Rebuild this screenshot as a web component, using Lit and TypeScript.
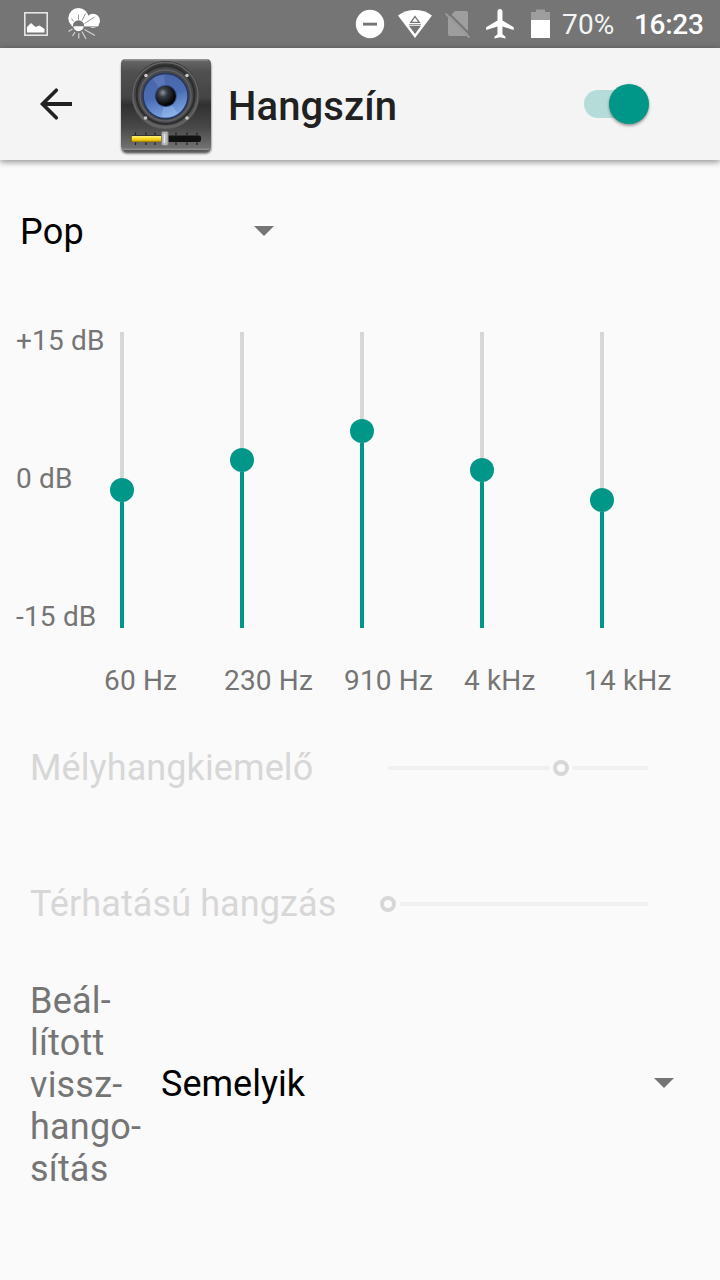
import { LitElement, html, svg, css } from "lit";
import { customElement, property } from "lit/decorators.js";

@customElement("status-bar")
class StatusBar extends LitElement {
  static styles = css`
    :host { display: block; }
    .bar { height: 48px; box-sizing: border-box; background: #757575; color: #fff; display: flex; align-items: flex-start; font: 400 28px/48px Roboto, sans-serif; }
    .left { display: block; width: 355px; height: 48px; }
    .right { display: block; width: 207px; height: 48px; }
    .pct { width: 72px; padding-top: 1px; white-space: nowrap; font-size: 28px; letter-spacing: .15px; color: #f4f4f4; }
    .time { font-weight: 500; padding-top: 1px; white-space: nowrap; letter-spacing: -.3px; }
  `;
  render() {
    return html`<div class="bar">
      <svg class="left" viewBox="0 0 355 48">
        <rect x="24.8" y="12.8" width="22.4" height="22.4" fill="none" stroke="#ececec" stroke-width="1.5"/>
        <path d="M27 32.5V27l4-4 4.5 4 4-1.5 5 3.5v3.500z" fill="#fff"/>
        <g fill="#fff"><circle cx="78.500" cy="18.300" r="10.200"/><circle cx="93" cy="20.700" r="7"/><path d="M80 16h10l9 9-1.500 2H78z"/></g>
        <g stroke="#8a8a8a" stroke-width=".9"><path d="M78.500 19.500V14.500M73.500 21.500l-2-3M82 20.500l3.500-7M84.500 23.500l10-6.500M71.500 25l-2-.8"/></g>
        <circle cx="78.500" cy="26" r="5.700" fill="#757575"/>
        <path d="M73.300 26.200h10.400a5.200 5 0 0 1-10.400 0z" fill="#fff"/>
        <path d="M84 26.500h14" stroke="#b0b0b0"/>
        <path d="M78.800 33v5.500M82 31.500l4 7.500M84.500 29.500l10.500 6M75 32l-2.500 4M72.500 29l-4 2.500" stroke="#d2d2d2" stroke-width="1.200"/>
      </svg>
      <svg class="right" viewBox="355 0 207 48">
        <circle cx="370" cy="24" r="14.200" fill="#fff"/><rect x="363" y="22.700" width="14" height="2.900" fill="#757575"/>
        <path d="M398 15.500C403 11.800 409 10 415 10s12 1.800 17 5.500L415 38z" fill="#fff"/>
        <path d="M410.700 22.300h8.600L415 16.600z" fill="none" stroke="#757575" stroke-width="1.300"/>
        <path d="M409 25.800h12l-6 8.200z" fill="#757575"/><path d="M409 24.500h12" stroke="#999"/>
        <path d="M455 11h11a2 2 0 0 1 2 2v21a2 2 0 0 1-2 2h-16a2 2 0 0 1-2-2V18z" fill="#9e9e9e"/>
        <path d="M447 11.500l23 23" stroke="#757575" stroke-width="2"/><path d="M445.500 13.500l24 24" stroke="#9a9a9a" stroke-width="2"/>
        <path transform="translate(483.400 5.900) scale(1.380 1.420)" d="M22 17v-2l-8.200-4.800V4a1.800 1.800 0 0 0-3.600 0v6.200L2 15v2l8.200-2.500V20L8 21.700V23l4-1 4 1v-1.300L13.800 20v-5.500z" fill="#fff"/>
        <path d="M531 12h5V9.500h9V12h5v9h-19z" fill="#9e9e9e"/><rect x="531" y="20" width="19" height="18" fill="#fff"/>
      </svg>
      <div class="pct">70%</div><div class="time">16:23</div>
    </div>`;
  }
}

@customElement("title-bar")
class TitleBar extends LitElement {
  static styles = css`
    :host { display: block; }
    .bar { height: 112px; background: #f4f4f4; box-shadow: 0 1px 7px rgba(0,0,0,.28), 0 3px 5px rgba(0,0,0,.18); display: flex; align-items: center; }
    .back { display: block; width: 36px; height: 36px; margin-left: 38px; }
    .logo { display: block; width: 100px; height: 106px; margin-left: 42px; margin-top: 2px; }
    .title { font: 500 40px/47px Roboto, sans-serif; letter-spacing: .1px; color: #212121; margin-left: 12px; padding-top: 4px; flex: 1; }
    .switch { display: flex; justify-content: flex-end; align-items: center; width: 65px; height: 28px; margin-right: 71px; border-radius: 14px; background: linear-gradient(90deg, #b5dcd9 48px, transparent 48px); }
    .thumb { width: 40px; height: 40px; flex: none; border-radius: 50%; background: #009688; box-shadow: 0 2px 3px rgba(0,0,0,.35), 0 0 2px rgba(0,0,0,.12); }
  `;
  render() {
    const ticks = [135.5, 146, 155, 176, 187, 197];
    return html`<div class="bar">
      <svg class="back" viewBox="38 86 36 36"><path d="M56.300 90.200L42.500 104l13.800 13.800" fill="none" stroke="#212121" stroke-width="3.600" stroke-linecap="round"/><path d="M72 104H42.500" stroke="#212121" stroke-width="4"/></svg>
      <svg class="logo" viewBox="116 52 100 106">
        <defs>
          <linearGradient id="box" x1="0" y1="0" x2="0" y2="1"><stop offset="0" stop-color="#686868"/><stop offset=".14" stop-color="#505050"/><stop offset=".42" stop-color="#454545"/><stop offset=".5" stop-color="#303030"/><stop offset=".75" stop-color="#484848"/><stop offset="1" stop-color="#757575"/></linearGradient>
          <linearGradient id="rim" x1="0" y1="0" x2="0" y2="1"><stop offset="0" stop-color="#333"/><stop offset="1" stop-color="#5e5e5e"/></linearGradient>
          <linearGradient id="cone" x1=".3" y1="0" x2=".6" y2="1"><stop offset="0" stop-color="#4a64a4"/><stop offset=".5" stop-color="#4b6db6"/><stop offset="1" stop-color="#83aae6"/></linearGradient>
          <radialGradient id="cap" cx=".36" cy=".34" r=".62"><stop offset="0" stop-color="#8e949c"/><stop offset=".35" stop-color="#373c43"/><stop offset="1" stop-color="#030405"/></radialGradient>
          <linearGradient id="yel" x1="0" y1="0" x2="0" y2="1"><stop offset="0" stop-color="#fff27a"/><stop offset=".5" stop-color="#f7d51c"/><stop offset="1" stop-color="#d5a500"/></linearGradient>
          <filter id="soft" x="-10%" y="-10%" width="120%" height="120%"><feGaussianBlur stdDeviation="1.100"/></filter>
        </defs>
        <rect x="121.500" y="61" width="89.500" height="92.500" rx="5" fill="#222" opacity=".75" filter="url(#soft)"/>
        <rect x="121" y="59" width="90" height="91" rx="4.500" fill="url(#box)"/>
        <path d="M124 59.800h84" stroke="#a0a0a0" stroke-width="1.200"/>
        <path d="M123 149.200h86" stroke="#999" stroke-width="1"/>
        <circle cx="165.500" cy="95" r="34" fill="url(#rim)"/>
        <circle cx="165.500" cy="95" r="32.500" fill="none" stroke="#666" stroke-width="1.300"/>
        <circle cx="165.500" cy="95" r="29" fill="#45474a" stroke="#2c2c2c" stroke-width="2"/>
        <circle cx="165.500" cy="95.500" r="25.500" fill="none" stroke="#5e6063" stroke-width="1.500"/>
        <circle cx="165.500" cy="96" r="22.500" fill="url(#cone)" stroke="#26375f" stroke-width="1.500"/>
        <path d="M165.500 96l-13-17a22 22 0 0 1 12-4z" fill="#7d9adb" opacity=".3"/>
        <path d="M165.500 96l-4 21a21 21 0 0 0 16-4z" fill="#b2dcff" opacity=".25"/>
        <circle cx="165.800" cy="96" r="11" fill="#334d85"/>
        <circle cx="165.700" cy="96" r="10.200" fill="url(#cap)"/>
        <g fill="#c9c9c9"><circle cx="146" cy="75.500" r="1.800"/><circle cx="187" cy="75.500" r="1.800"/><circle cx="145.500" cy="118" r="1.800"/><circle cx="187" cy="118" r="1.800"/></g>
        ${ticks.map((x) => svg`<path d=${`M${x} 132.5v2.500M${x} 142.500v2.500`} stroke="#222" stroke-width="1.300"/>`)}
        <rect x="131" y="135.500" width="70" height="6.500" rx="2" fill="#111"/>
        <rect x="131.500" y="136" width="32" height="5.700" rx="1" fill="url(#yel)"/>
        <rect x="161.500" y="131.500" width="6.700" height="14" rx="1.500" fill="#b5b5b5" stroke="#777" stroke-width=".8"/>
        <path d="M164.500 134v9" stroke="#e9e9e9" stroke-width="1.500"/>
      </svg>
      <div class="title">Hangszín</div>
      <div class="switch"><div class="thumb"></div></div>
    </div>`;
  }
}

@customElement("band-slider")
class BandSlider extends LitElement {
  @property({ type: Number }) level = 0;
  static styles = css`
    :host { display: block; width: 24px; }
    .track { display: flex; flex-direction: column; align-items: center; height: 296px; }
    .rest { width: 4px; background: #d7d7d7; }
    .knob { width: 24px; height: 24px; flex: none; border-radius: 50%; background: #009688; }
    .fill { width: 4px; flex: 1; background: #009688; }
  `;
  render() {
    return html`<div class="track"><div class="rest" style="height:${this.level}px"></div><div class="knob"></div><div class="fill"></div></div>`;
  }
}

@customElement("effect-slider")
class EffectSlider extends LitElement {
  @property({ type: Number }) value = 0;
  static styles = css`
    :host { display: block; width: 268px; }
    .track { display: flex; align-items: center; height: 16px; }
    .before, .after { height: 4px; background: #f0f0f0; }
    .before { margin-left: 8px; }
    .knob { width: 16px; height: 16px; box-sizing: border-box; border: 4px solid #d7d7d7; border-radius: 50%; margin: 0 4px; flex: none; }
    .start { margin-left: 0; }
    .after { flex: 1; margin-right: 0; }
  `;
  render() {
    return html`<div class="track">${this.value
      ? html`<div class="before" style="width:${this.value}px"></div><div class="knob"></div>`
      : html`<div class="knob start"></div>`}<div class="after"></div></div>`;
  }
}

@customElement("app-root")
class AppRoot extends LitElement {
  static styles = css`
    :host { display: block; width: 720px; height: 1280px; overflow: hidden; background: #fafafa; font: 400 36px/42px Roboto, sans-serif; letter-spacing: .1px; color: #000; }
    .preset { display: flex; align-items: center; height: 42px; margin: 51px 0 0 20px; letter-spacing: .3px; }
    .preset span { width: 234px; }
    .arrow { display: block; width: 20px; height: 10px; fill: #757575; }
    .eq { display: flex; margin: 71px 0 0 16px; font-size: 28px; line-height: 33px; letter-spacing: .18px; color: #757575; }
    .scale { display: flex; flex-direction: column; justify-content: space-between; height: 309px; width: 94px; white-space: nowrap; }
    .bands { display: flex; gap: 96px; padding-top: 8px; }
    .freqs { display: grid; grid-template-columns: repeat(5, 120px); margin: 31px 0 0 104px; font-size: 28px; line-height: 33px; letter-spacing: .16px; color: #757575; white-space: nowrap; }
    .effect { display: flex; align-items: center; height: 42px; margin-left: 30px; color: #d7d7d7; }
    .effect span { width: 350px; white-space: nowrap; }
    .bass { margin-top: 50px; }
    .virt { margin-top: 94px; }
    .reverb { display: flex; align-items: center; margin: 55px 0 0 30px; }
    .label { width: 131px; letter-spacing: .2px; color: #757575; }
    .label div { white-space: nowrap; }
    .choice { width: 493px; padding-bottom: 2px; letter-spacing: 0; }
    .reverb .arrow { margin-bottom: 4px; }
    .preset .arrow { margin-bottom: 2px; }
  `;
  render() {
    const arrow = html`<svg class="arrow" viewBox="0 0 20 10"><path d="M0 0h20L10 10z"/></svg>`;
    return html`
      <status-bar></status-bar>
      <title-bar></title-bar>
      <div class="preset"><span>Pop</span>${arrow}</div>
      <div class="eq">
        <div class="scale"><div>+15 dB</div><div>0 dB</div><div>-15 dB</div></div>
        <div class="bands">${[146, 116, 87, 126, 156].map((v) => html`<band-slider .level=${v}></band-slider>`)}</div>
      </div>
      <div class="freqs">${["60 Hz", "230 Hz", "910 Hz", "4 kHz", "14 kHz"].map((t) => html`<div>${t}</div>`)}</div>
      <div class="effect bass"><span>Mélyhangkiemelő</span><effect-slider .value=${161}></effect-slider></div>
      <div class="effect virt"><span>Térhatású hangzás</span><effect-slider .value=${0}></effect-slider></div>
      <div class="reverb">
        <div class="label">${["Beál-", "lított", "vissz-", "hango-", "sítás"].map((t) => html`<div>${t}</div>`)}</div>
        <div class="choice">Semelyik</div>${arrow}
      </div>`;
  }
}
